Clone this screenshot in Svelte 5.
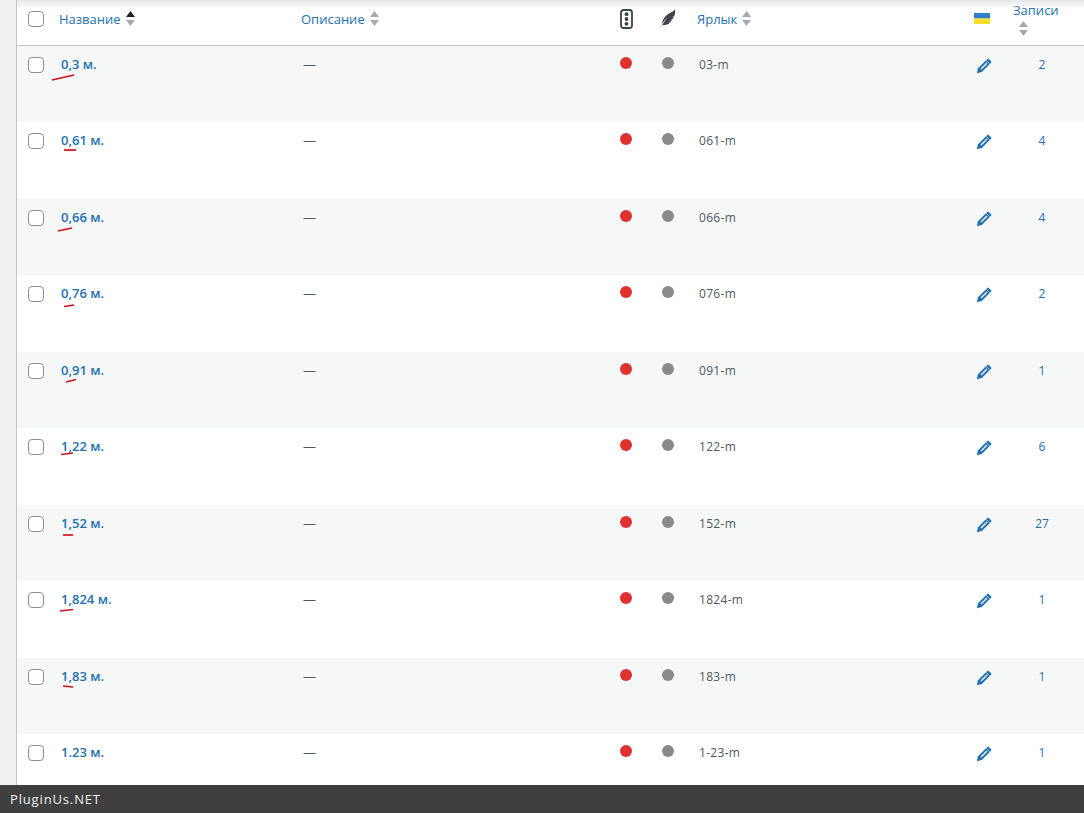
<script>
  const rows = [
    { name: '0,3 м.', slug: '03-m', count: 2 },
    { name: '0,61 м.', slug: '061-m', count: 4 },
    { name: '0,66 м.', slug: '066-m', count: 4 },
    { name: '0,76 м.', slug: '076-m', count: 2 },
    { name: '0,91 м.', slug: '091-m', count: 1 },
    { name: '1,22 м.', slug: '122-m', count: 6 },
    { name: '1,52 м.', slug: '152-m', count: 27 },
    { name: '1,824 м.', slug: '1824-m', count: 1 },
    { name: '1,83 м.', slug: '183-m', count: 1 },
    { name: '1.23 м.', slug: '1-23-m', count: 1 }
  ];
  const marks = [
    [52, 80, 74, 75],
    [64, 150, 76, 150],
    [58, 231, 72, 228],
    [64, 306.5, 74, 305],
    [66, 382, 76, 379.5],
    [61, 454.5, 73, 453],
    [63, 535, 73, 535],
    [60, 611, 73, 609.5],
    [63, 686, 73, 687]
  ];
</script>

{#snippet sort(active)}
  <svg class="sort" width="9" height="15" viewBox="0 0 9 15">
    <path d="M4.5 0 L9 6 H0 Z" fill={active ? '#1d2327' : '#a7aaad'} />
    <path d="M0 9 H9 L4.5 15 Z" fill="#a7aaad" />
  </svg>
{/snippet}

{#snippet pencil()}
  <svg class="pencil" width="16" height="16" viewBox="0 0 16 16">
    <path d="M0.8 15.2 L2 10.2 L10 2.2 L11.3 0.9 Q12 0.3 12.7 0.9 L15.1 3.3 Q15.7 4 15.1 4.7 L5.8 14 Z" fill="#2271b1" />
    <path d="M5 11 L11 5" stroke="#f0f4f7" stroke-width="1.5" />
    <path d="M10.2 2.2 L13.8 5.8" stroke="#cfe0ee" stroke-width="0.7" />
  </svg>
{/snippet}

<div class="page">
  <div class="gutter"></div>
  <main class="table">
    <header class="grid head">
      <div class="cell-check"><span class="box"></span></div>
      <div class="title"><span>Название</span>{@render sort(true)}</div>
      <div class="title"><span>Описание</span>{@render sort(false)}</div>
      <div class="icon-cell">
        <svg width="13" height="20" viewBox="0 0 13 20">
          <rect x="1" y="1" width="11" height="18" rx="2.5" fill="none" stroke="#3c434a" stroke-width="1.8" />
          <circle cx="6.5" cy="5.2" r="1.9" fill="#3c434a" />
          <circle cx="6.5" cy="10" r="1.9" fill="#3c434a" />
          <circle cx="6.5" cy="14.8" r="1.9" fill="#3c434a" />
        </svg>
      </div>
      <div class="icon-cell feather">
        <svg width="17" height="20" viewBox="0 0 17 20">
          <path d="M0.3 19.6 C2.2 15.8 4.6 12.4 8.4 8.6 C6.2 11.8 4.4 14 3.2 16.2 C6.2 16.4 9.4 15.6 11.2 13.6 L9.4 13.2 C10.8 13 12.2 12.4 13 11.4 L11.2 11 C12.8 10.6 14 9.8 14.8 8.4 L13.2 8.2 C14.8 7.6 15.6 6.4 16 5 C16.4 3.4 16.3 1.8 15.8 0.3 C15.2 1.7 13.8 2.5 12 3.4 C8.6 5 5.6 7.4 4 10.8 C3.2 12.6 2.9 14.3 2.6 16.2 C1.7 17.2 0.9 18.3 0.3 19.6 Z" fill="#3c434a" />
        </svg>
      </div>
      <div class="title"><span>Ярлык</span>{@render sort(false)}</div>
      <div class="flag-cell">
        <svg width="16" height="11" viewBox="0 0 16 11">
          <rect width="16" height="5.5" fill="#2f7fd0" />
          <rect y="5.5" width="16" height="5.5" fill="#f8e02a" />
        </svg>
      </div>
      <div class="count-head"><span>Записи</span>{@render sort(false)}</div>
    </header>

    {#each rows as row, i}
      <div class="grid row" class:alt={i % 2 === 0}>
        <div class="cell-check"><span class="box"></span></div>
        <a class="name" href="#top">{row.name}</a>
        <div class="desc">—</div>
        <div class="dot-cell"><span class="dot red"></span></div>
        <div class="dot-cell"><span class="dot grey"></span></div>
        <div class="slug">{row.slug}</div>
        <div class="edit">{@render pencil()}</div>
        <a class="count" href="#top">{row.count}</a>
      </div>
    {/each}
  </main>

  <svg class="marks" width="1084" height="813" viewBox="0 0 1084 813">
    {#each marks as m}
      <line x1={m[0]} y1={m[1]} x2={m[2]} y2={m[3]} stroke="#d2101c" stroke-width="1.7" />
    {/each}
  </svg>
  <div class="shade"></div>
  <footer class="footer">PluginUs.NET</footer>
</div>

<style>
  :global(body) {
    margin: 0;
    background: #fff;
    overflow: hidden;
  }
  .page {
    display: flex;
    position: relative;
    height: 813px;
    overflow: hidden;
    font-family: "Open Sans", "Noto Sans", sans-serif;
    font-size: 13px;
    color: #50575e;
  }
  .gutter {
    width: 16px;
    flex: none;
    background: #f0f0f1;
    border-right: 1px solid #c3c4c7;
  }
  .table {
    flex: 1;
    min-width: 0;
  }
  .grid {
    display: grid;
    grid-template-columns: 34px 242px 319px 42px 35px 277px 46px 1fr;
  }
  .head {
    height: 44.5px;
    border-bottom: 1px solid #c3c4c7;
    align-items: center;
    background: #fff;
  }
  .row {
    height: 76.5px;
    align-items: start;
    background: #fff;
  }
  .row.alt {
    background: #f6f7f7;
  }
  .cell-check {
    padding-left: 11px;
    display: flex;
  }
  .head .cell-check {
    margin-top: -6px;
  }
  .row .cell-check {
    padding-top: 11px;
  }
  .box {
    width: 14px;
    height: 14px;
    border: 1px solid #8c8f94;
    border-radius: 4px;
    background: #fff;
    display: block;
  }
  .title {
    display: flex;
    align-items: center;
    gap: 5px;
    padding-left: 8px;
    color: #2271b1;
    margin-top: -8px;
    margin-bottom: -1px;
  }
  .icon-cell {
    display: flex;
    padding-left: 8px;
    margin-top: -6px;
  }
  .icon-cell.feather {
    padding-left: 5px;
  }
  .flag-cell {
    display: flex;
    padding-left: 8px;
    margin-top: -8px;
  }
  .sort {
    flex: none;
  }
  .count-head {
    color: #2271b1;
    display: flex;
    flex-direction: column;
    align-items: flex-start;
    padding-left: 1px;
    gap: 2px;
    margin-top: -7px;
    line-height: 18px;
  }
  .count-head .sort {
    margin-left: 6px;
  }
  .name {
    padding: 9px 0 0 10px;
    font-size: 13px;
    font-weight: 600;
    line-height: 19px;
    color: #2271b1;
    text-decoration: none;
  }
  .desc {
    padding: 9px 0 0 10px;
    line-height: 19px;
  }
  .dot-cell {
    padding: 11px 0 0 8px;
    display: flex;
  }
  .dot {
    width: 12px;
    height: 12px;
    border-radius: 50%;
    display: block;
  }
  .red {
    background: #e03131;
  }
  .grey {
    background: #8a8a8a;
  }
  .slug {
    padding: 9px 0 0 10px;
    font-size: 12px;
    line-height: 19px;
    letter-spacing: 0.3px;
  }
  .edit {
    padding: 12px 0 0 10px;
    display: flex;
  }
  .count {
    padding-top: 9px;
    line-height: 19px;
    font-size: 12px;
    color: #2271b1;
    text-decoration: none;
    text-align: center;
    padding-right: 12px;
  }
  .marks {
    position: absolute;
    inset: 0;
    pointer-events: none;
  }
  .shade {
    position: absolute;
    top: 0;
    left: 17px;
    right: 0;
    height: 9px;
    background: linear-gradient(#e6e7e8, rgba(255, 255, 255, 0));
    pointer-events: none;
  }
  .footer {
    position: absolute;
    left: 0;
    right: 0;
    bottom: 0;
    height: 28px;
    line-height: 28px;
    padding-left: 10px;
    background: #3f3f3f;
    color: #f0f0f0;
    font-family: "Open Sans", sans-serif;
    font-size: 13px;
    font-weight: 400;
    letter-spacing: 0.85px;
  }
</style>
